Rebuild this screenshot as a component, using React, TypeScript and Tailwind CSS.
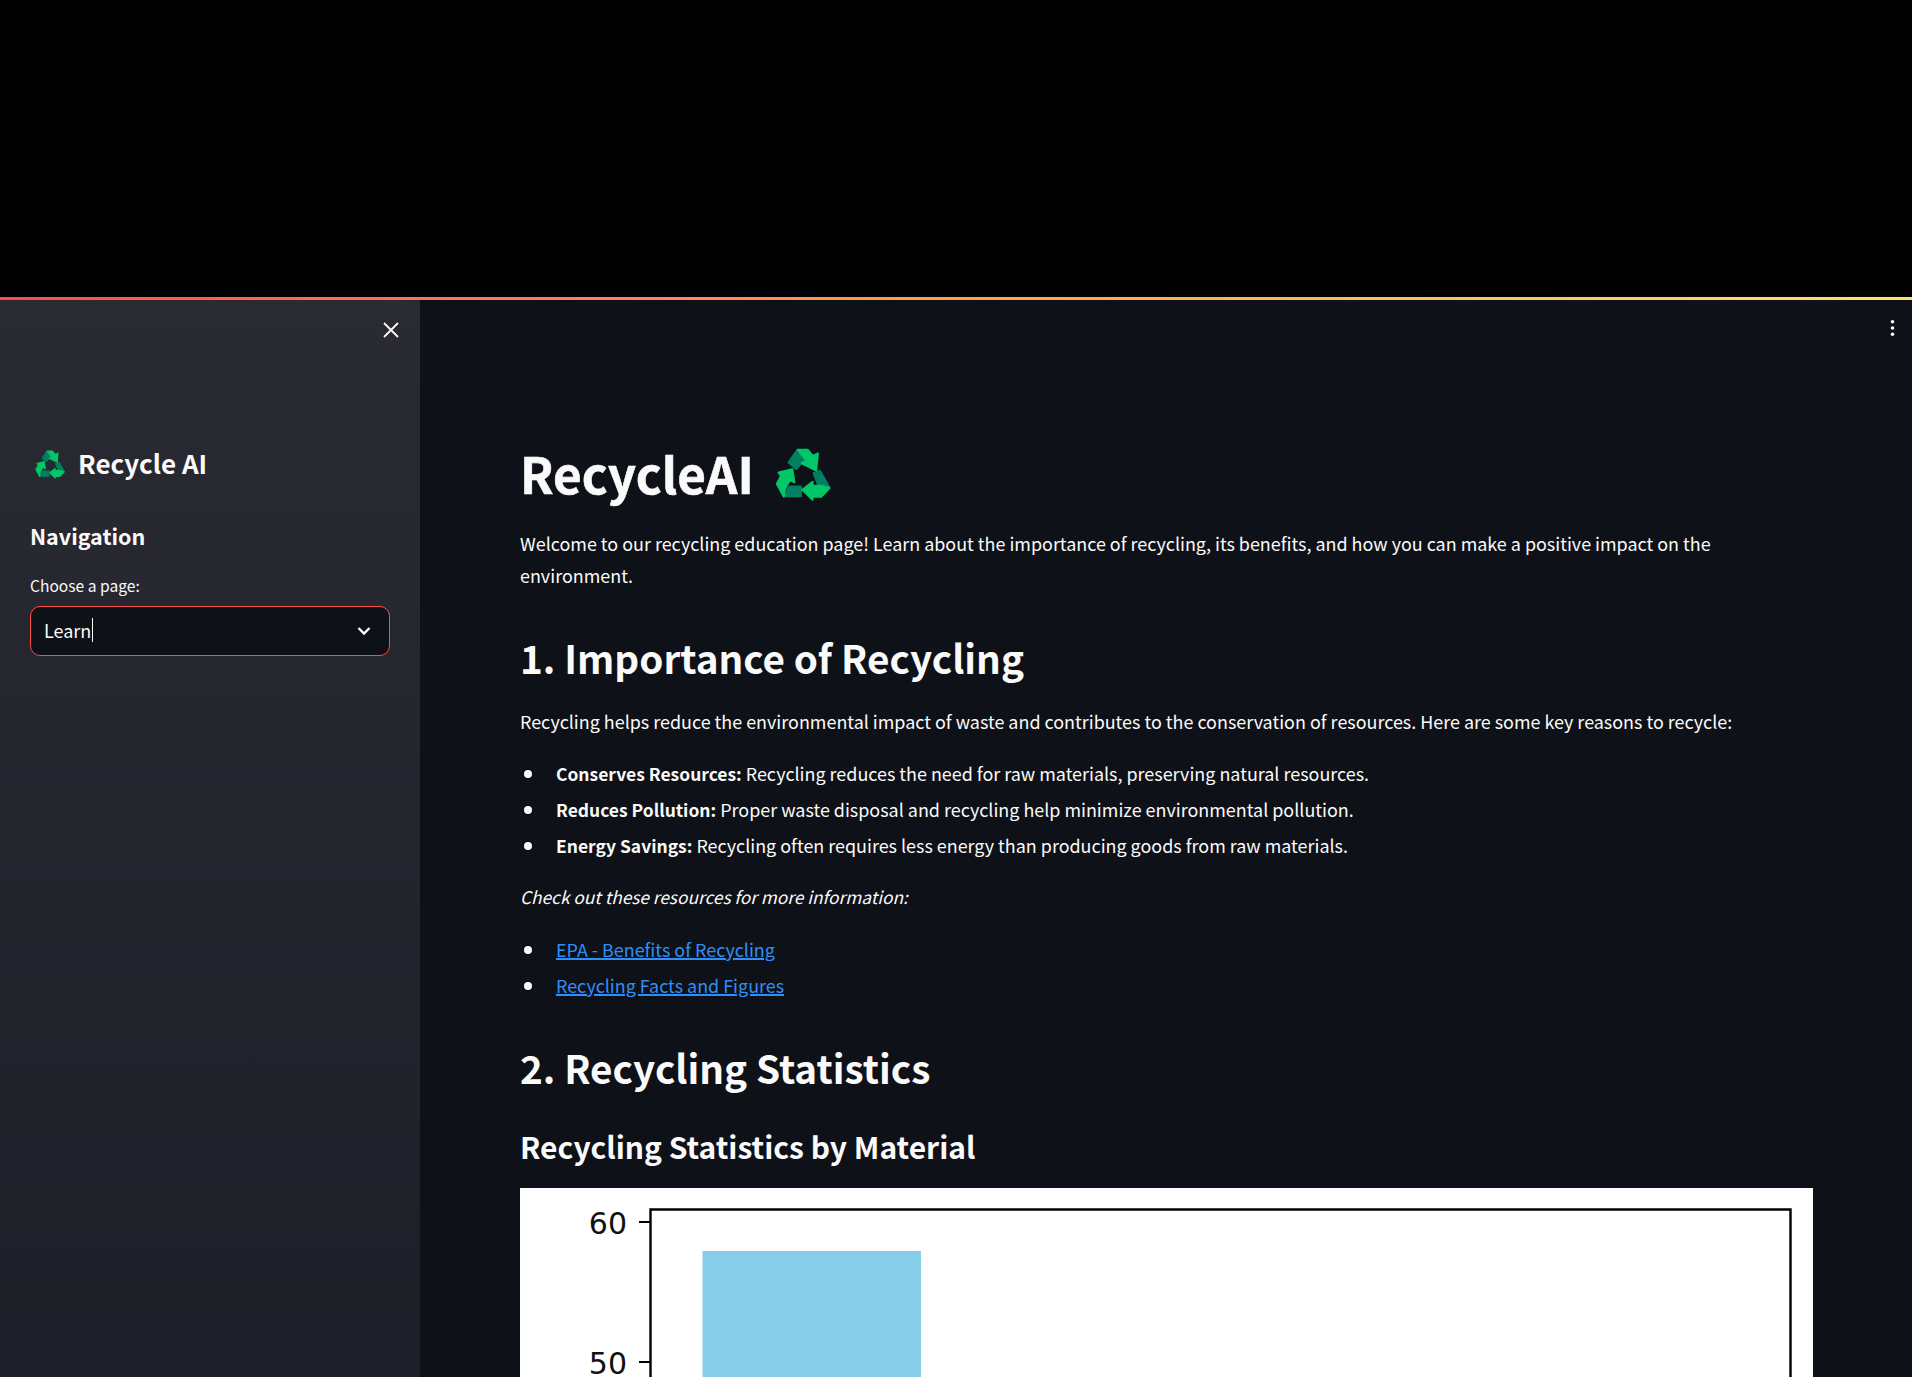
const font = { fontFamily: '"Noto Sans CJK SC", "Noto Sans", sans-serif' };

function RecycleIcon({ className }: { className: string }) {
  return (
    <svg viewBox="12 26 168 160" className={className} strokeLinejoin="round" strokeWidth="6">
      <g fill="#008060" stroke="#008060">
        <path d="M52 70 L78 33 L100 62 L76 90 Z" />
        <path d="M128 102 L147 95 L175 143 L150 160 Z" />
        <path d="M40 172 L54 142 H90 V172 Z" />
      </g>
      <g fill="#00c767" stroke="#00c767">
        <path d="M80 31 H110 L125 50 L141 42 L136 94 L92 72 L106 64 Z" />
        <path d="M176 147 L151 173 H125 V182 L94 152 L125 128 V140 L150 140 Z" />
        <path d="M17 134 L30 110 L22 100 L64 90 L70 130 L57 122 L42 148 L38 173 Z" />
      </g>
    </svg>
  );
}

const bullets = [
  ["Conserves Resources:", " Recycling reduces the need for raw materials, preserving natural resources."],
  ["Reduces Pollution:", " Proper waste disposal and recycling help minimize environmental pollution."],
  ["Energy Savings:", " Recycling often requires less energy than producing goods from raw materials."],
];

function Dot() {
  return <span className="mt-[13px] mr-[24px] ml-[4px] h-[8px] w-[8px] shrink-0 rounded-full bg-[#fafafa]" />;
}

export default function App() {
  return (
    <div className="h-[1377px] overflow-hidden bg-black text-[#fafafa]" style={font}>
      <div className="h-[297px] bg-black" />
      <div className="h-[3px] bg-gradient-to-r from-[#ff4b4b] to-[#ffe26a]" />
      <div className="flex h-[1077px]">
        <aside className="flex w-[420px] shrink-0 flex-col bg-gradient-to-b from-[#2a2a33] to-[#1e1f28] px-[30px]">
          <div className="flex h-[48px] items-end justify-end">
            <svg viewBox="0 0 16 16" className="mr-[-9px] mb-[10px] h-[16px] w-[16px]" fill="none" stroke="#fafafa" strokeWidth="1.8">
              <path d="M1 1 L15 15 M15 1 L1 15" />
            </svg>
          </div>
          <div className="mt-[96px] flex h-[40px] items-center gap-[13px] pl-[5px]">
            <RecycleIcon className="h-[29px] w-[30px]" />
            <span className="pb-[3px] text-[26px] font-semibold leading-[40px]">Recycle AI</span>
          </div>
          <div className="mt-[35px] text-[21.5px] font-semibold leading-[34px]">Navigation</div>
          <div className="mt-[20px] text-[15.6px] leading-[24px]">Choose a page:</div>
          <div className="mt-[9px] flex h-[50px] items-center justify-between rounded-[10px] border border-[#ff4b4b] bg-[#0e1117] pr-[17px] pl-[13px]">
            <span className="flex items-center pb-[2px] text-[18px] leading-[28px]">
              Learn<span className="ml-[1px] h-[24px] w-[1px] bg-white" />
            </span>
            <svg viewBox="0 0 16 16" className="h-[16px] w-[16px]" fill="none" stroke="#fafafa" strokeWidth="2.4">
              <path d="M2.5 5 L8 10.5 L13.5 5" />
            </svg>
          </div>
        </aside>
        <main className="relative min-w-0 flex-1 bg-[#0e1117] pr-[99px] pl-[100px]">
          <svg viewBox="0 0 4 20" className="absolute top-[19px] right-[17px] h-[18px] w-[5px]" fill="#fafafa">
            <circle cx="2" cy="3" r="2" />
            <circle cx="2" cy="10" r="2" />
            <circle cx="2" cy="17" r="2" />
          </svg>
          <div className="mt-[138px] flex h-[70px] items-center gap-[21px]">
            <h1 className="text-[49.3px] font-bold leading-[70px] [-webkit-text-stroke:0.6px_#fafafa]">RecycleAI</h1>
            <RecycleIcon className="mt-[3px] h-[53px] w-[56px]" />
          </div>
          <p className="mt-[19px] text-[17.93px] leading-[32px]">
            Welcome to our recycling education page! Learn about the importance of recycling, its benefits, and how you can make a positive impact on the environment.
          </p>
          <h2 className="mt-[39px] text-[38.7px] font-semibold leading-[54px]">1. Importance of Recycling</h2>
          <p className="mt-[21px] text-[17.93px] leading-[32px]">
            Recycling helps reduce the environmental impact of waste and contributes to the conservation of resources. Here are some key reasons to recycle:
          </p>
          <ul className="mt-[20px] flex flex-col gap-[4px]">
            {bullets.map(([b, t]) => (
              <li key={b} className="flex h-[32px] text-[17.93px] leading-[32px]">
                <Dot />
                <span className="block h-[32px]"><strong className="text-[17.45px] font-semibold leading-none">{b}</strong>{t}</span>
              </li>
            ))}
          </ul>
          <p className="mt-[20px] text-[17.3px] italic leading-[32px]">Check out these resources for more information:</p>
          <ul className="mt-[20px] flex flex-col gap-[4px]">
            {["EPA - Benefits of Recycling", "Recycling Facts and Figures"].map((t) => (
              <li key={t} className="flex text-[17.93px] leading-[32px]">
                <Dot />
                <a className="text-[#2f8ff7] underline decoration-2" href="#">{t}</a>
              </li>
            ))}
          </ul>
          <h2 className="mt-[39px] text-[38.7px] font-semibold leading-[54px]">2. Recycling Statistics</h2>
          <h3 className="mt-[30px] text-[30px] font-semibold leading-[44px]">Recycling Statistics by Material</h3>
          <div className="mt-[20px] h-[189px] overflow-hidden bg-white">
            <svg viewBox="0 0 1293 189" className="block h-[189px] w-full">
              <rect x="182.5" y="63" width="218.5" height="126" fill="#87ceeb" />
              <path d="M130.5 189 V21.5 H1270.5 V189" fill="none" stroke="#000" strokeWidth="2.4" />
              <path d="M119 34 H130 M119 174 H130" stroke="#000" strokeWidth="2.2" />
              <text x="107" y="46" textAnchor="end" fontFamily="DejaVu Sans" fontSize="30" fill="#111">60</text>
              <text x="107" y="186" textAnchor="end" fontFamily="DejaVu Sans" fontSize="30" fill="#111">50</text>
            </svg>
          </div>
        </main>
      </div>
    </div>
  );
}
